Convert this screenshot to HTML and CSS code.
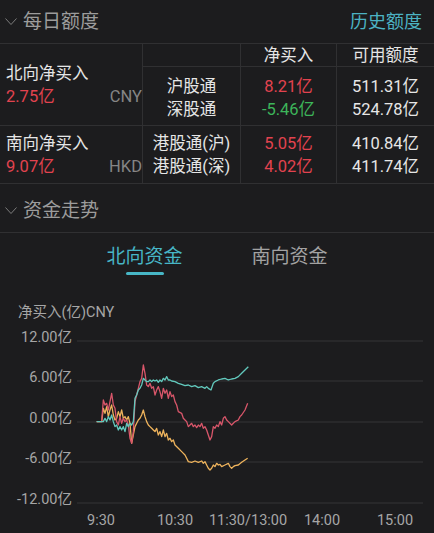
FILE: index.html
```html
<!DOCTYPE html>
<html lang="zh-CN">
<head>
  <meta charset="UTF-8">
  <meta name="viewport" content="width=device-width, initial-scale=1.0">
  <title>沪深港通资金</title>
  <link rel="stylesheet" href="styles.css">
</head>
<body>
  <div class="sec-head">
    <div class="sec-title">
      <svg class="chev" width="12" height="8" viewBox="0 0 12 8"><polyline points="0.5,0.5 6,6.5 11.5,0.5" /></svg>
      <span>每日额度</span>
    </div>
    <a class="sec-link">历史额度</a>
  </div>

  <div class="quota">
    <div class="q-side q-north">
      <div class="q-name">北向净买入</div>
      <div class="q-sum"><span class="up">2.75亿</span><span class="cur">CNY</span></div>
    </div>
    <div class="q-th"></div>
    <div class="q-th">净买入</div>
    <div class="q-th">可用额度</div>

    <div class="q-cell q-r1"><div>沪股通</div><div>深股通</div></div>
    <div class="q-cell q-r1"><div class="up">8.21亿</div><div class="down">-5.46亿</div></div>
    <div class="q-cell q-r1"><div>511.31亿</div><div>524.78亿</div></div>

    <div class="q-side q-south">
      <div class="q-name">南向净买入</div>
      <div class="q-sum"><span class="up">9.07亿</span><span class="cur">HKD</span></div>
    </div>
    <div class="q-cell"><div>港股通(沪)</div><div>港股通(深)</div></div>
    <div class="q-cell"><div class="up">5.05亿</div><div class="up">4.02亿</div></div>
    <div class="q-cell"><div>410.84亿</div><div>411.74亿</div></div>
  </div>

  <div class="sec-head sec-flow">
    <div class="sec-title">
      <svg class="chev" width="12" height="8" viewBox="0 0 12 8"><polyline points="0.5,0.5 6,6.5 11.5,0.5" /></svg>
      <span>资金走势</span>
    </div>
  </div>

  <div class="tabs">
    <div class="tab active">北向资金</div>
    <div class="tab">南向资金</div>
  </div>

  <svg class="chart" width="434" height="253" viewBox="0 280 434 253">
    <text class="unit" x="18" y="317">净买入(亿)CNY</text>

    <g class="grid">
      <line x1="77" y1="341" x2="423" y2="341" />
      <line x1="77" y1="381" x2="423" y2="381" />
      <line x1="77" y1="422" x2="423" y2="422" />
      <line x1="77" y1="462" x2="423" y2="462" />
      <line x1="77" y1="503" x2="423" y2="503" />
    </g>

    <g class="ylab">
      <text x="72" y="342">12.00亿</text>
      <text x="72" y="382">6.00亿</text>
      <text x="72" y="423">0.00亿</text>
      <text x="72" y="463">-6.00亿</text>
      <text x="72" y="504">-12.00亿</text>
    </g>

    <g class="xlab">
      <text x="101" y="525">9:30</text>
      <text x="175" y="525">10:30</text>
      <text x="248" y="525">11:30/13:00</text>
      <text x="322" y="525">14:00</text>
      <text x="395" y="525">15:00</text>
    </g>

    <!-- 分时数据，按 1/3 像素记 -->
    <g transform="translate(85 355) scale(0.3333)">
      <polyline class="ln-orange" vector-effect="non-scaling-stroke" points="35,200 50,200 55,160 60,175 65,155 70,185 75,165 80,150 85,180 90,195 95,190 100,170 105,185 110,165 115,190 120,185 125,195 130,185 135,205 140,265 145,240 150,215 155,205 160,195 165,190 170,180 175,165 180,185 185,200 190,210 195,215 200,220 205,225 210,230 215,220 220,240 225,230 230,245 235,225 240,245 245,235 250,255 255,250 260,260 265,255 270,270 280,280 290,290 300,300 305,310 310,320 320,322 330,318 340,322 350,318 355,325 360,320 365,330 370,340 375,345 380,340 385,330 390,335 395,325 400,330 405,328 410,335 420,330 430,325 435,335 440,340 445,335 450,332 460,330 470,322 480,315 488,310" />
      <polyline class="ln-red" vector-effect="non-scaling-stroke" points="35,200 50,200 55,135 60,150 65,145 70,165 75,140 80,115 85,150 90,160 95,200 100,210 105,185 110,205 115,190 120,200 125,195 130,210 135,250 140,265 145,230 150,140 155,120 160,100 165,80 170,70 175,30 180,55 185,90 190,95 195,85 200,100 205,95 210,120 215,105 220,95 225,110 230,130 235,100 240,115 245,105 250,130 255,110 260,125 265,120 270,140 275,150 280,170 290,175 295,190 300,195 305,200 310,215 315,210 320,205 325,215 330,210 335,218 340,210 345,215 350,205 355,220 360,215 365,225 370,240 375,255 380,245 385,215 390,220 395,210 400,215 405,200 410,210 415,190 420,185 425,195 430,200 440,210 445,205 450,200 460,195 465,185 470,180 480,165 488,145" />
      <polyline class="ln-teal" vector-effect="non-scaling-stroke" points="35,200 55,200 60,190 65,200 70,185 75,195 80,180 85,200 90,215 95,210 100,225 105,215 110,225 115,215 120,230 125,205 130,215 135,205 140,210 145,200 150,130 155,120 160,105 165,100 170,90 175,70 180,75 185,80 190,80 195,75 200,80 205,75 210,78 215,75 220,82 225,75 230,80 235,70 240,75 245,65 250,75 255,75 260,78 270,80 280,85 290,88 300,92 310,90 320,95 330,92 340,98 350,95 360,100 365,95 370,100 378,105 385,85 390,80 400,75 410,72 420,70 430,75 440,72 450,70 460,65 470,55 480,45 490,35" />
    </g>
  </svg>
</body>
</html>
```

FILE: styles.css
```css
body {
  margin: 0;
  width: 434px;
  height: 533px;
  overflow: hidden;
  background: #1c1c1e;
  color: #e6e6e6;
  font-family: Roboto, "Noto Sans CJK SC", sans-serif;
}

.sec-head {
  height: 44px;
  display: flex;
  align-items: center;
  justify-content: space-between;
  padding: 0 12px 0 5px;
  border-bottom: 1px solid #303032;
  box-sizing: border-box;
}
.sec-flow {
  margin-top: 5px;
}
.sec-title {
  display: flex;
  align-items: center;
  gap: 6px;
  color: #9c9c9c;
  font-size: 19px;
  line-height: 24px;
}
.chev polyline {
  fill: none;
  stroke: #7c7c7c;
  stroke-width: 1;
}
.sec-link {
  color: #4cb3c4;
  font-size: 18px;
  line-height: 24px;
}

.quota {
  display: grid;
  grid-template-columns: 143px 98px 96px 1fr;
  grid-template-rows: 23px 59px 57px;
  font-size: 16.5px;
  line-height: 23px;
  border-bottom: 1px solid #303032;
}
.q-side {
  display: flex;
  flex-direction: column;
  justify-content: center;
  padding-left: 6px;
  border-right: 1px solid #303032;
}
.q-north {
  grid-row: 1 / 3;
  border-bottom: 1px solid #303032;
}
.q-sum {
  display: flex;
  justify-content: space-between;
}
.cur {
  color: #858585;
}
.q-th {
  text-align: center;
  border-right: 1px solid #303032;
  border-bottom: 1px solid #303032;
}
.q-cell {
  display: flex;
  flex-direction: column;
  justify-content: center;
  align-items: center;
  border-right: 1px solid #303032;
}
.quota > div:nth-child(4),
.quota > div:nth-child(7),
.quota > div:nth-child(11) {
  border-right: none;
}
.q-r1 {
  padding-top: 3px;
  border-bottom: 1px solid #303032;
}

.up {
  color: #e2434f;
}
.down {
  color: #3db55a;
}

.tabs {
  display: flex;
  padding: 12px 72px 5px;
}
.tab {
  flex: 1;
  display: flex;
  flex-direction: column;
  align-items: center;
  color: #a2a2a2;
  font-size: 19px;
  line-height: 24px;
}
.tab::after {
  content: "";
  width: 38px;
  height: 3px;
  margin-top: 3px;
  border-radius: 2px;
}
.tab.active {
  color: #47b6c6;
}
.tab.active::after {
  background: #47b6c6;
}

.chart {
  display: block;
}
.chart text {
  font-family: Roboto, "Noto Sans CJK SC", sans-serif;
  font-size: 14.5px;
  fill: #a6a6a6;
}
.ylab text {
  text-anchor: end;
}
.xlab text {
  text-anchor: middle;
}
.grid line {
  stroke: #343436;
  stroke-width: 1;
}
.chart polyline {
  fill: none;
  stroke-width: 1.3;
  stroke-linejoin: round;
}
.ln-teal { stroke: #62c9bd; }
.ln-red { stroke: #d8566a; }
.ln-orange { stroke: #eeb35c; }
```
